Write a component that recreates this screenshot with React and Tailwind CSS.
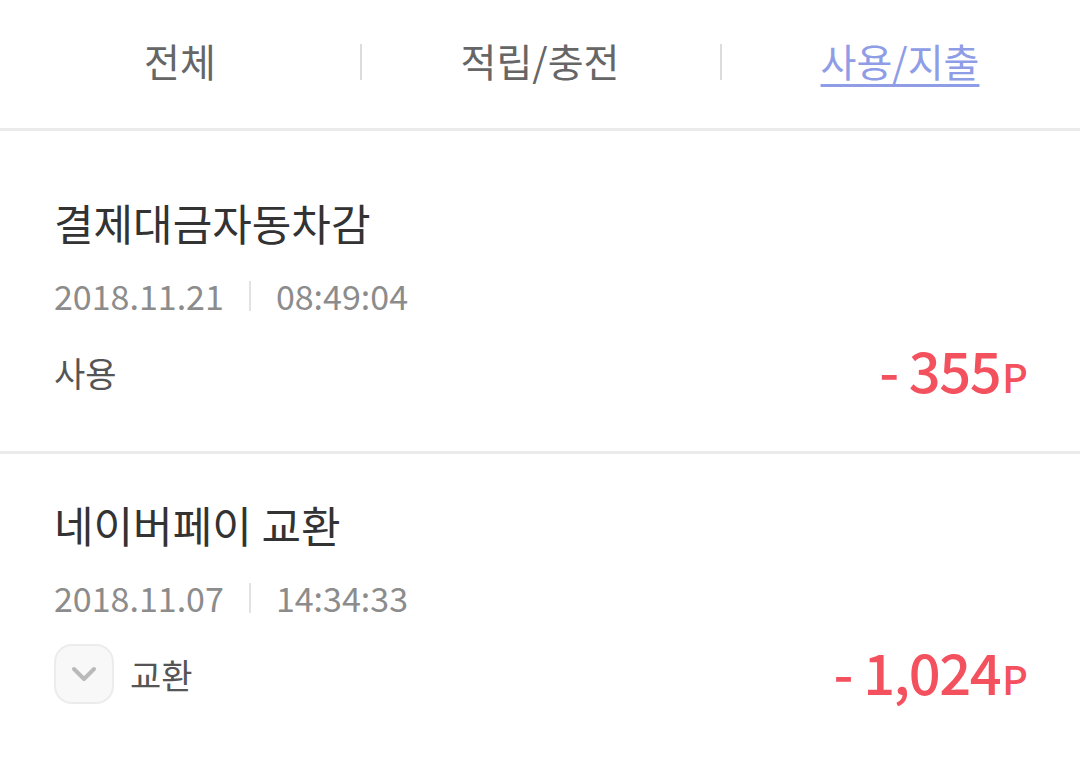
const FONT = "font-['Noto_Sans_CJK_KR','Noto_Sans',sans-serif]";

const tabs = [
  { label: '전체', active: false },
  { label: '적립/충전', active: false },
  { label: '사용/지출', active: true },
];

const history = [
  { title: '결제대금자동차감', date: '2018.11.21', time: '08:49:04', kind: '사용', amount: '355', toggle: false },
  { title: '네이버페이 교환', date: '2018.11.07', time: '14:34:33', kind: '교환', amount: '1,024', toggle: true },
];

function Chevron() {
  return (
    <div className="w-[60px] h-[60px] rounded-[18px] border-2 border-[#ececec] bg-[#f8f8f8] flex items-center justify-center">
      <svg width="26" height="16" viewBox="0 0 26 16" fill="none">
        <path d="M3 3l10 10L23 3" stroke="#b9b9b9" strokeWidth="4" strokeLinecap="round" strokeLinejoin="round" />
      </svg>
    </div>
  );
}

function HistoryItem({ item, first, last }) {
  return (
    <div
      className={`${first ? 'pt-[67px]' : 'pt-[46px]'} pb-[49px] pl-[54px] pr-[52px] ${
        last ? '' : 'border-b-[3px] border-[#ebebeb]'
      }`}
    >
      <div className="text-[43px] leading-[48px] text-[#333333]">{item.title}</div>
      <div className="mt-[30px] flex items-center text-[34px] leading-[40px] text-[#8c8c8c]">
        <span>{item.date}</span>
        <span className="mx-[25px] w-[2px] h-[30px] bg-[#e2e2e2]" />
        <span>{item.time}</span>
      </div>
      <div className="mt-[26px] h-[60px] flex items-center justify-between">
        <div className="flex items-center gap-[16px]">
          {item.toggle && <Chevron />}
          <span className="text-[34px] text-[#555555]">{item.kind}</span>
        </div>
        <div className="flex items-baseline text-[#f4515e] font-medium">
          <span className="text-[56px] leading-[60px] tracking-[-1.5px]">- {item.amount}</span>
          <span className="text-[40px] leading-[60px] ml-[2px]">P</span>
        </div>
      </div>
    </div>
  );
}

export default function App() {
  return (
    <div className={`${FONT} w-[1080px] h-[766px] bg-white overflow-hidden`}>
      <div className="h-[131px] border-b-[3px] border-[#ebebeb] flex items-center pb-[5px]">
        {tabs.map((t, i) => (
          <div key={t.label} className="flex-1 flex items-center relative h-[36px]">
            {i > 0 && <span className="absolute left-0 top-0 w-[2px] h-[36px] bg-[#dcdcdc]" />}
            <div className="w-full text-center">
              <span
                className={
                  t.active
                    ? 'text-[39px] leading-[36px] text-[#8f9ce6] underline decoration-[3px] underline-offset-[7px]'
                    : 'text-[39px] leading-[36px] text-[#666666]'
                }
              >
                {t.label}
              </span>
            </div>
          </div>
        ))}
      </div>
      {history.map((item, i) => (
        <HistoryItem key={item.title} item={item} first={i === 0} last={i === history.length - 1} />
      ))}
    </div>
  );
}
